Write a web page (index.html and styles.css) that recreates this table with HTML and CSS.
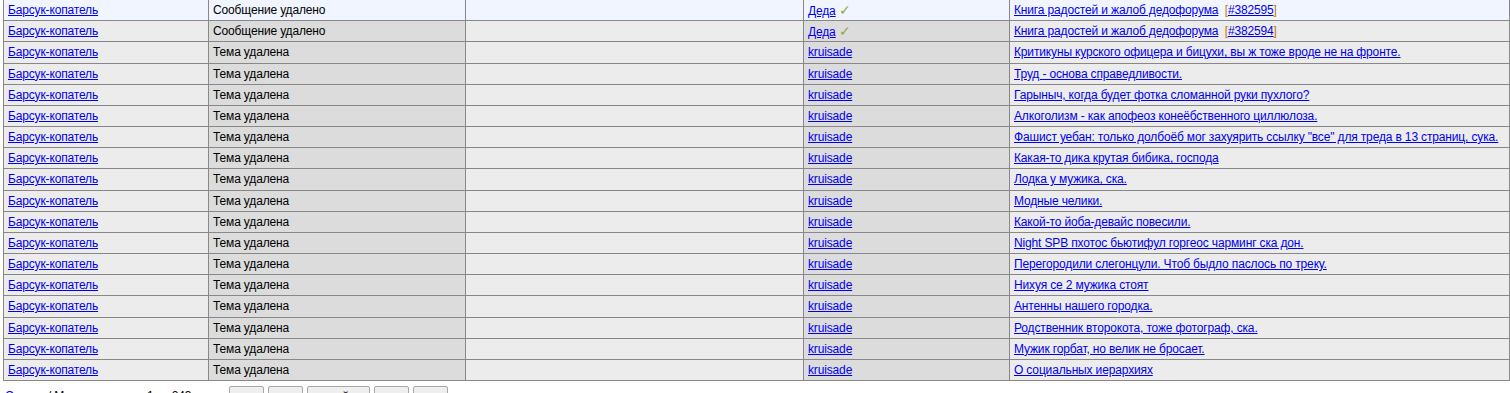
FILE: index.html
```html
<!DOCTYPE html>
<html lang="ru">
<head>
<meta charset="utf-8">
<title>Модерация</title>
<link rel="stylesheet" href="styles.css">
</head>
<body>
<table class="log">
  <colgroup>
    <col class="c-user">
    <col class="c-act">
    <col class="c-note">
    <col class="c-author">
    <col class="c-topic">
  </colgroup>
  <tbody>
    <tr class="hl">
      <td><a href="#">Барсук-копатель</a></td>
      <td>Сообщение удалено</td>
      <td></td>
      <td><a href="#">Деда</a> <span class="ok">✓</span></td>
      <td><a href="#">Книга радостей и жалоб дедофорума</a>&nbsp; <span class="br">[</span><a href="#">#382595</a><span class="br">]</span></td>
    </tr>
    <tr>
      <td><a href="#">Барсук-копатель</a></td>
      <td>Сообщение удалено</td>
      <td></td>
      <td><a href="#">Деда</a> <span class="ok">✓</span></td>
      <td><a href="#">Книга радостей и жалоб дедофорума</a>&nbsp; <span class="br">[</span><a href="#">#382594</a><span class="br">]</span></td>
    </tr>
    <tr><td><a href="#">Барсук-копатель</a></td><td>Тема удалена</td><td></td><td><a href="#">kruisade</a></td><td><a href="#">Критикуны курского офицера и бицухи, вы ж тоже вроде не на фронте.</a></td></tr>
    <tr><td><a href="#">Барсук-копатель</a></td><td>Тема удалена</td><td></td><td><a href="#">kruisade</a></td><td><a href="#">Труд - основа справедливости.</a></td></tr>
    <tr><td><a href="#">Барсук-копатель</a></td><td>Тема удалена</td><td></td><td><a href="#">kruisade</a></td><td><a href="#">Гарыныч, когда будет фотка сломанной руки пухлого?</a></td></tr>
    <tr><td><a href="#">Барсук-копатель</a></td><td>Тема удалена</td><td></td><td><a href="#">kruisade</a></td><td><a href="#">Алкоголизм - как апофеоз конеёбственного циллюлоза.</a></td></tr>
    <tr><td><a href="#">Барсук-копатель</a></td><td>Тема удалена</td><td></td><td><a href="#">kruisade</a></td><td><a href="#">Фашист уебан: только долбоёб мог захуярить ссылку "все" для треда в 13 страниц, сука.</a></td></tr>
    <tr><td><a href="#">Барсук-копатель</a></td><td>Тема удалена</td><td></td><td><a href="#">kruisade</a></td><td><a href="#">Какая-то дика крутая бибика, господа</a></td></tr>
    <tr><td><a href="#">Барсук-копатель</a></td><td>Тема удалена</td><td></td><td><a href="#">kruisade</a></td><td><a href="#">Лодка у мужика, ска.</a></td></tr>
    <tr><td><a href="#">Барсук-копатель</a></td><td>Тема удалена</td><td></td><td><a href="#">kruisade</a></td><td><a href="#">Модные челики.</a></td></tr>
    <tr><td><a href="#">Барсук-копатель</a></td><td>Тема удалена</td><td></td><td><a href="#">kruisade</a></td><td><a href="#">Какой-то йоба-девайс повесили.</a></td></tr>
    <tr><td><a href="#">Барсук-копатель</a></td><td>Тема удалена</td><td></td><td><a href="#">kruisade</a></td><td><a href="#">Night SPB пхотос бьютифул горгеос чарминг ска дон.</a></td></tr>
    <tr><td><a href="#">Барсук-копатель</a></td><td>Тема удалена</td><td></td><td><a href="#">kruisade</a></td><td><a href="#">Перегородили слегонцули. Чтоб быдло паслось по треку.</a></td></tr>
    <tr><td><a href="#">Барсук-копатель</a></td><td>Тема удалена</td><td></td><td><a href="#">kruisade</a></td><td><a href="#">Нихуя се 2 мужика стоят</a></td></tr>
    <tr><td><a href="#">Барсук-копатель</a></td><td>Тема удалена</td><td></td><td><a href="#">kruisade</a></td><td><a href="#">Антенны нашего городка.</a></td></tr>
    <tr><td><a href="#">Барсук-копатель</a></td><td>Тема удалена</td><td></td><td><a href="#">kruisade</a></td><td><a href="#">Родственник второкота, тоже фотограф, ска.</a></td></tr>
    <tr><td><a href="#">Барсук-копатель</a></td><td>Тема удалена</td><td></td><td><a href="#">kruisade</a></td><td><a href="#">Мужик горбат, но велик не бросает.</a></td></tr>
    <tr><td><a href="#">Барсук-копатель</a></td><td>Тема удалена</td><td></td><td><a href="#">kruisade</a></td><td><a href="#">О социальных иерархиях</a></td></tr>
  </tbody>
</table>
<div class="pager">
  <span class="pager-info"><a href="#">Сводка</a> / Модерация, стр. 1 из 243</span>
  <div class="pager-btns">
    <button class="pbtn">&lt;&lt;</button>
    <button class="pbtn">&lt;</button>
    <button class="pbtn wide">перейти</button>
    <button class="pbtn">&gt;</button>
    <button class="pbtn">&gt;&gt;</button>
  </div>
</div>
</body>
</html>
```
FILE: styles.css
```css
html, body {
  margin: 0;
  padding: 0;
  background: #ffffff;
}

body {
  font-family: "Liberation Sans", Arial, sans-serif;
  font-size: 12px;
  letter-spacing: -0.15px;
  color: #000;
  padding-left: 3px;
}

a {
  color: #0000ee;
  text-decoration: underline;
}

.log {
  table-layout: fixed;
  border-collapse: separate;
  border-spacing: 0;
  width: 1507px;
  border-left: 1px solid #888;
}

.c-user { width: 205px; }
.c-act { width: 257px; }
.c-note { width: 338px; }
.c-author { width: 206px; }
.c-topic { width: 500px; }

.log td {
  height: 20.18px;
  padding: 0 4px;
  border-right: 1px solid #888;
  border-bottom: 1px solid #888;
  background: #ececec;
  white-space: nowrap;
  overflow: hidden;
  vertical-align: middle;
  line-height: 14px;
}

.log td:nth-child(2),
.log td:nth-child(4) {
  background: #dcdcdc;
}

.log tr.hl td {
  background: #f0f5ff;
}

.ok {
  color: #8fa83c;
  font-size: 14px;
  line-height: 14px;
}

.br {
  color: #c87800;
}

.pager {
  display: flex;
  align-items: flex-start;
  padding: 5px 0 0 2px;
}

.pager-info {
  width: 224px;
  line-height: 20px;
  white-space: nowrap;
}

.pager-btns {
  display: flex;
  gap: 4px;
}

.pbtn {
  width: 35px;
  height: 22px;
  padding: 0;
  font-family: "Liberation Sans", Arial, sans-serif;
  font-size: 12px;
  color: #000;
  background: #efefef;
  border: 1px solid #a8a8a8;
  border-radius: 2px;
}

.pbtn.wide {
  width: 63px;
}
```
